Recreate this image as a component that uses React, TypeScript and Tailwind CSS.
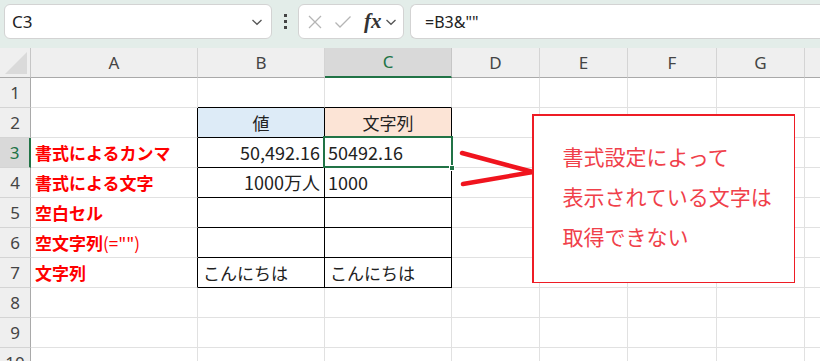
const cols = ["A", "B", "C", "D", "E", "F", "G", "H"];
const colW = "31px 167px 127px 127px 88px 88px 89px 88px 88px";

type Cell = { text?: React.ReactNode; cls?: string; bg?: string };

const labels: Record<number, React.ReactNode> = {
  3: "書式によるカンマ",
  4: "書式による文字",
  5: "空白セル",
  6: (
    <>
      空文字列<span className="font-normal">(=&quot;&quot;)</span>
    </>
  ),
  7: "文字列",
};

function getCell(r: number, c: number): Cell {
  if (c === 0 && labels[r]) return { text: labels[r], cls: "text-[#ff0000] font-bold text-[17px] pl-[4px]" };
  if (r === 2 && c === 1) return { text: "値", cls: "justify-center", bg: "bg-[#ddebf7]" };
  if (r === 2 && c === 2) return { text: "文字列", cls: "justify-center", bg: "bg-[#fce4d6]" };
  if (r === 3 && c === 1) return { text: "50,492.16", cls: "justify-end pr-[4px] text-[18px]" };
  if (r === 3 && c === 2) return { text: "50492.16", cls: "pl-[3px] text-[18px]" };
  if (r === 4 && c === 1) return { text: "1000万人", cls: "justify-end pr-[4px] text-[18px]" };
  if (r === 4 && c === 2) return { text: "1000", cls: "pl-[3px] text-[18px]" };
  if (r === 7 && (c === 1 || c === 2)) return { text: "こんにちは", cls: "pl-[5px]" };
  return {};
}

function borderCls(r: number, c: number) {
  const inTable = r >= 2 && r <= 7 && (c === 1 || c === 2);
  const leftOfTable = r >= 2 && r <= 7 && c === 0;
  const aboveTable = r === 1 && (c === 1 || c === 2);
  const right = inTable || leftOfTable ? "border-r-black" : "border-r-[#e1e1e1]";
  const bottom = inTable || aboveTable ? "border-b-black" : "border-b-[#e1e1e1]";
  return `${right} ${bottom}`;
}

function Chevron({ className }: { className?: string }) {
  return (
    <svg width="12" height="8" viewBox="0 0 12 8" className={className}>
      <path d="M1.5 2 L6 6.3 L10.5 2" fill="none" stroke="#555" strokeWidth="1.3" />
    </svg>
  );
}

export default function App() {
  const rows = [1, 2, 3, 4, 5, 6, 7, 8, 9, 10];
  return (
    <div className="w-[820px] h-[361px] overflow-hidden bg-white relative" style={{ fontFamily: "'Noto Sans CJK JP', sans-serif" }}>
      {/* formula bar */}
      <div className="h-[48px] bg-[#e3ede9] flex items-start pt-[4px] pl-[4px]">
        <div className="w-[268px] h-[35px] bg-white border border-[#d3d3d3] rounded-[6px] flex items-center justify-between pl-[7px] pr-[8px]">
          <span className="text-[17px] text-[#222]" style={{ fontFamily: "'Noto Sans', sans-serif" }}>C3</span>
          <Chevron />
        </div>
        <div className="w-[26px] h-[35px] flex flex-col items-center justify-center gap-[3px]">
          <span className="w-[3px] h-[3px] bg-[#444]" />
          <span className="w-[3px] h-[3px] bg-[#444]" />
          <span className="w-[3px] h-[3px] bg-[#444]" />
        </div>
        <div className="w-[106px] h-[35px] bg-white border border-[#d3d3d3] rounded-[6px] flex items-center pl-[8px] gap-[8px]">
          <svg width="16" height="16" viewBox="0 0 16 16">
            <path d="M2 2 L14 14 M14 2 L2 14" stroke="#b5b5b5" strokeWidth="1.3" />
          </svg>
          <svg width="18" height="16" viewBox="0 0 18 16" className="ml-[3px]">
            <path d="M1.5 8.5 L6 13 L16.5 2.5" fill="none" stroke="#b5b5b5" strokeWidth="1.3" />
          </svg>
          <span className="text-[21px] italic font-bold text-[#333] ml-[4px] leading-none" style={{ fontFamily: "'Liberation Serif', serif" }}>fx</span>
          <Chevron className="-ml-[5px]" />
        </div>
        <div className="ml-[6px] flex-1 h-[35px] bg-white border border-[#d3d3d3] rounded-l-[6px] border-r-0 flex items-center pl-[14px]">
          <span className="text-[16px] text-[#222]" style={{ fontFamily: "'Noto Sans', sans-serif" }}>=B3&amp;""</span>
        </div>
      </div>

      {/* sheet */}
      <div className="grid" style={{ gridTemplateColumns: colW }}>
        <div className="h-[30px] bg-[#efefef] border-r border-b border-r-[#c6c6c6] border-b-[#a9a9a9] relative">
          <svg width="22" height="22" viewBox="0 0 22 22" className="absolute right-[3px] bottom-[3px]">
            <path d="M22 0 L22 22 L0 22 Z" fill="#dadada" />
          </svg>
        </div>
        {cols.map((c) => (
          <div
            key={c}
            className={`h-[30px] flex items-center justify-center text-[17px] border-b border-r ${
              c === "C"
                ? "bg-[#d9d9d9] text-[#217346] border-b-2 border-b-[#217346] border-r-[#c6c6c6]"
                : "bg-[#efefef] text-[#444] border-b-[#a9a9a9] border-r-[#d4d4d4]"
            }`}
            style={{ fontFamily: "'Noto Sans', sans-serif" }}
          >
            {c === "H" ? "" : c}
          </div>
        ))}

        {rows.map((r) => (
          <>
            <div
              key={`h${r}`}
              className={`h-[30px] flex items-center justify-center text-[17px] border-b border-b-[#d4d4d4] ${
                r === 3
                  ? "bg-[#d9d9d9] text-[#217346] border-r-2 border-r-[#217346]"
                  : "bg-[#efefef] text-[#444] border-r border-r-[#a9a9a9]"
              }`}
              style={{ fontFamily: "'Noto Sans', sans-serif" }}
            >
              {r}
            </div>
            {cols.map((_, c) => {
              const cell = getCell(r, c);
              return (
                <div
                  key={`${r}-${c}`}
                  className={`h-[30px] border-r border-b ${borderCls(r, c)} ${cell.bg ?? "bg-white"} flex items-center text-[17px] text-[#222] whitespace-nowrap overflow-hidden ${cell.cls ?? ""}`}
                >
                  {cell.text}
                </div>
              );
            })}
          </>
        ))}
      </div>

      {/* selected cell C3 */}
      <div className="absolute left-[323px] top-[136px] w-[130px] h-[32px] border-2 border-[#217346] pointer-events-none" />
      <div className="absolute left-[449px] top-[165px] w-[6px] h-[6px] bg-[#217346] border border-white" />

      {/* arrow */}
      <svg className="absolute left-0 top-0" width="820" height="361">
        <path d="M462 153 L533 172 M463 184 L533 172" stroke="#f0141e" strokeWidth="4.5" strokeLinecap="round" fill="none" />
      </svg>

      {/* callout */}
      <div className="absolute left-[532px] top-[114px] w-[263px] h-[169px] bg-[#ee1c25] p-[1.5px]">
        <div className="w-full h-full bg-white flex flex-col pl-[29px] pt-[26px] gap-[12px] text-[21px] leading-[28px] text-[#f0404a]">
          <span>書式設定によって</span>
          <span>表示されている文字は</span>
          <span>取得できない</span>
        </div>
      </div>
    </div>
  );
}
